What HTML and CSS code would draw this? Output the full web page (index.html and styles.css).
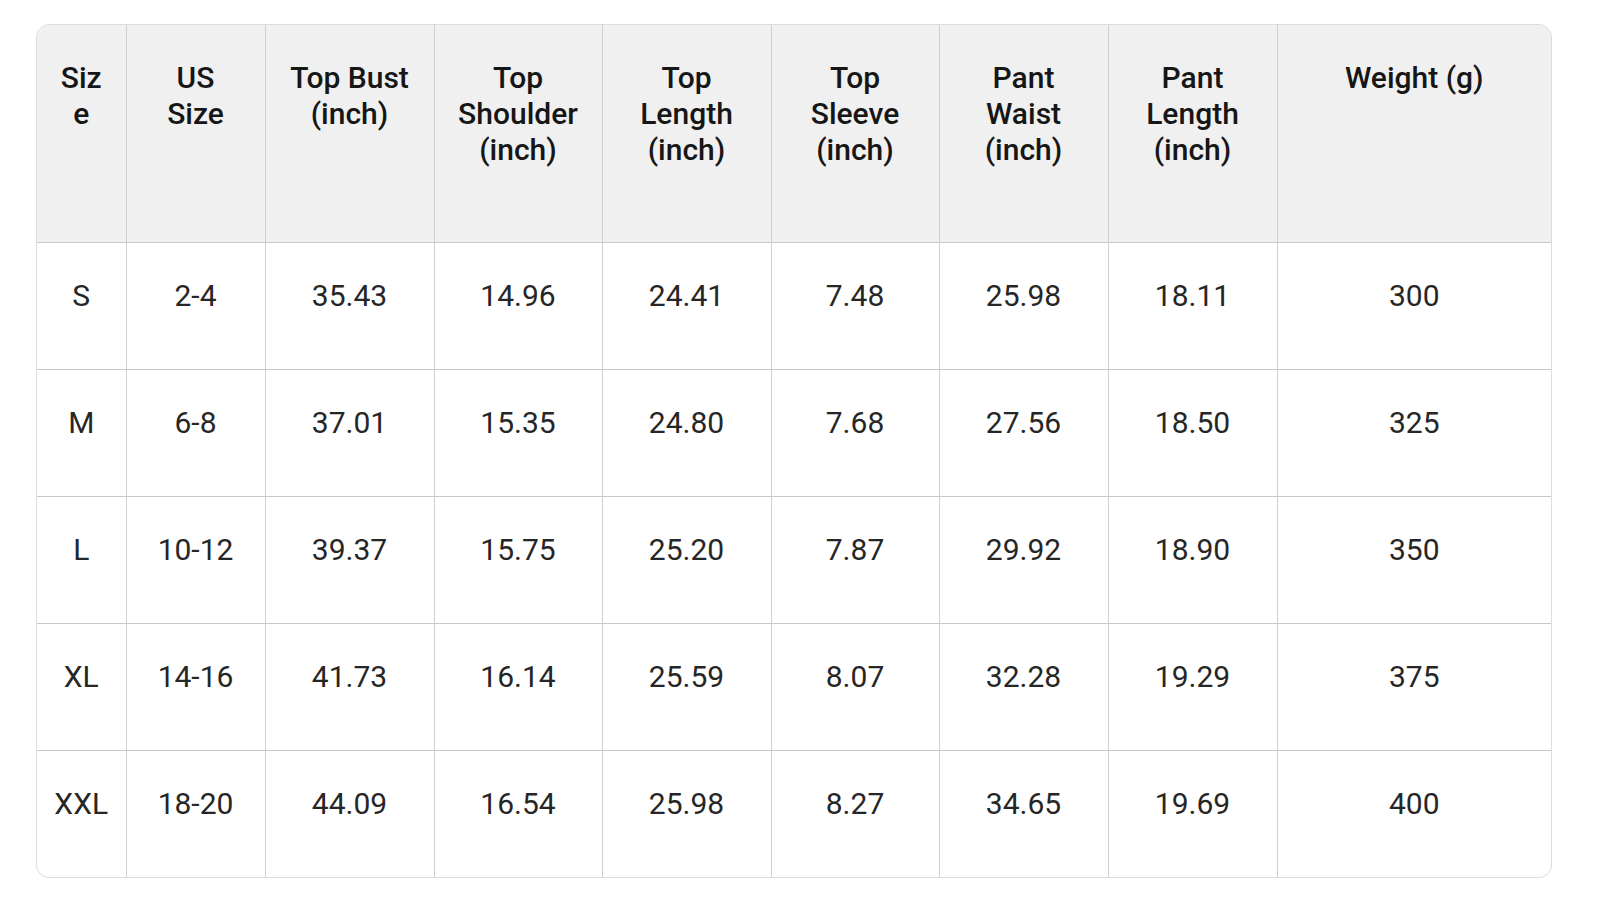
FILE: index.html
```html
<!DOCTYPE html>
<html lang="en">
<head>
<meta charset="utf-8">
<title>Size Chart</title>
<link rel="stylesheet" href="styles.css">
</head>
<body>
<div class="page">
  <div class="card">
    <table class="chart">
      <colgroup>
        <col class="c1"><col class="c2"><col class="c3"><col class="c4"><col class="c5">
        <col class="c6"><col class="c7"><col class="c8"><col class="c9">
      </colgroup>
      <thead>
        <tr>
          <th class="narrow">Size</th>
          <th>US<br>Size</th>
          <th>Top Bust<br>(inch)</th>
          <th>Top<br>Shoulder<br>(inch)</th>
          <th>Top<br>Length<br>(inch)</th>
          <th>Top<br>Sleeve<br>(inch)</th>
          <th>Pant<br>Waist<br>(inch)</th>
          <th>Pant<br>Length<br>(inch)</th>
          <th>Weight (g)</th>
        </tr>
      </thead>
      <tbody>
        <tr><td>S</td><td>2-4</td><td>35.43</td><td>14.96</td><td>24.41</td><td>7.48</td><td>25.98</td><td>18.11</td><td>300</td></tr>
        <tr><td>M</td><td>6-8</td><td>37.01</td><td>15.35</td><td>24.80</td><td>7.68</td><td>27.56</td><td>18.50</td><td>325</td></tr>
        <tr><td>L</td><td>10-12</td><td>39.37</td><td>15.75</td><td>25.20</td><td>7.87</td><td>29.92</td><td>18.90</td><td>350</td></tr>
        <tr><td>XL</td><td>14-16</td><td>41.73</td><td>16.14</td><td>25.59</td><td>8.07</td><td>32.28</td><td>19.29</td><td>375</td></tr>
        <tr><td>XXL</td><td>18-20</td><td>44.09</td><td>16.54</td><td>25.98</td><td>8.27</td><td>34.65</td><td>19.69</td><td>400</td></tr>
      </tbody>
    </table>
  </div>
</div>
</body>
</html>
```
FILE: styles.css
```css
html, body {
  margin: 0;
  padding: 0;
  background: #ffffff;
}
.page {
  padding: 24px 0 0 36px;
}
.card {
  width: 1514px;
  border: 1.5px solid #dcdcdc;
  border-radius: 13px;
  overflow: hidden;
}
.chart {
  width: 100%;
  table-layout: fixed;
  border-collapse: collapse;
  font-family: Roboto, "Noto Sans", sans-serif;
  font-size: 30px;
  line-height: 36px;
  color: #1e1e1e;
}
.c1 { width: 89px; }
.c2 { width: 139px; }
.c3 { width: 169px; }
.c4 { width: 168px; }
.c5 { width: 169px; }
.c6 { width: 168px; }
.c7 { width: 169px; }
.c8 { width: 169px; }
.c9 { width: auto; }
.chart th,
.chart td {
  text-align: center;
  vertical-align: top;
  padding: 35px 6px 0;
  border-left: 1.5px solid #cfcfcf;
  border-top: 1.5px solid #c8c8c8;
  white-space: nowrap;
}
.chart th:first-child,
.chart td:first-child {
  border-left: none;
}
.chart th.narrow {
  white-space: normal;
  overflow-wrap: anywhere;
  padding-left: 22px;
  padding-right: 22px;
}
.chart thead th {
  border-top: none;
  background: #f0f0f0;
  font-weight: 500;
  height: 182px;
  color: #161616;
}
.chart tbody td {
  height: 91px;
  font-weight: 400;
  color: #262626;
}
```
